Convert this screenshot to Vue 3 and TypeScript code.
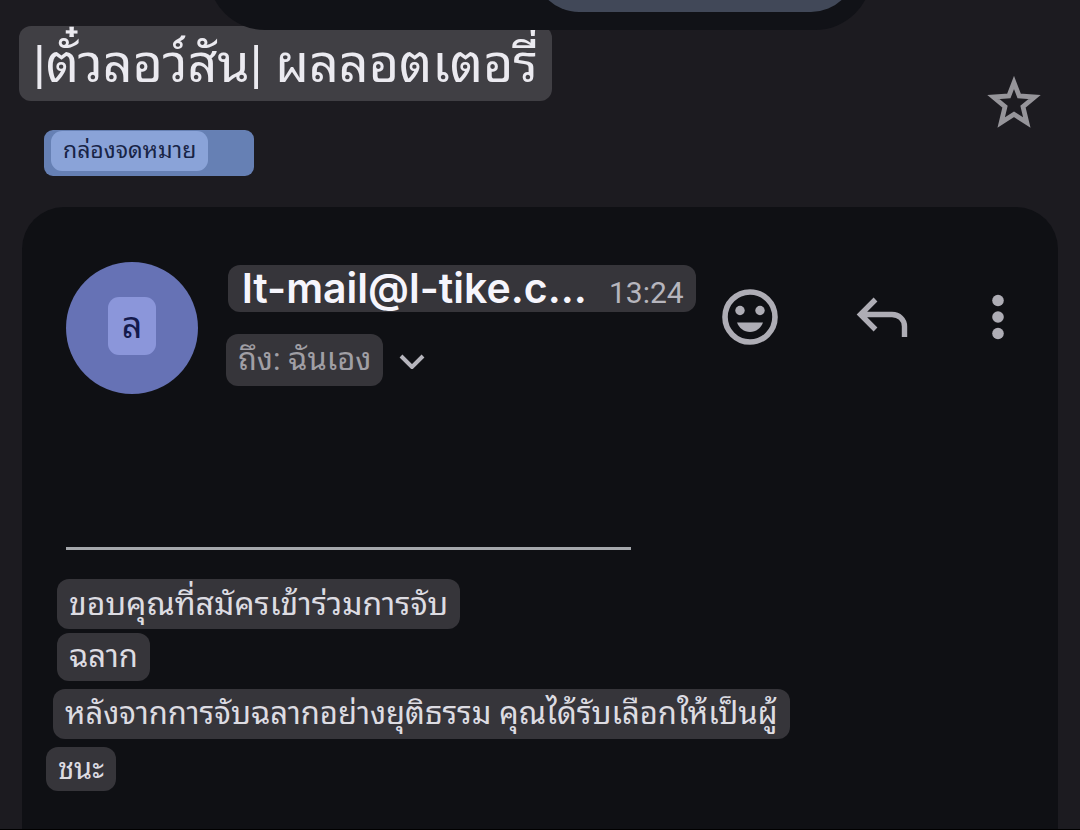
<script setup lang="ts">
interface BodyLine {
  text: string
  kind: 'intro' | 'result' | 'closing'
}

const subject = '|ตั๋วลอว์สัน| ผลลอตเตอรี่'
const folder = 'กล่องจดหมาย'
const sender = { initial: 'ล', address: 'lt-mail@l-tike.c...', time: '13:24', to: 'ถึง: ฉันเอง' }

const lines: BodyLine[] = [
  { text: 'ขอบคุณที่สมัครเข้าร่วมการจับ', kind: 'intro' },
  { text: 'ฉลาก', kind: 'intro' },
  { text: 'หลังจากการจับฉลากอย่างยุติธรรม คุณได้รับเลือกให้เป็นผู้', kind: 'result' },
  { text: 'ชนะ', kind: 'closing' },
]
</script>

<template>
  <main class="screen">
    <div class="island"><span class="island-pill"></span></div>

    <header class="top">
      <div class="heading">
        <h1 class="subject">{{ subject }}</h1>
        <button class="folder" type="button"><span>{{ folder }}</span></button>
      </div>
      <button class="icon-btn star" type="button" aria-label="ติดดาว">
        <svg width="54" height="52" viewBox="0 0 54 52">
          <path
            fill="none" stroke="currentColor" stroke-width="4.800"
            d="M27 6.500 L32.200 20 L47.600 21 L36 30.700 L39.800 46.500 L27 38.300 L14.200 46.500 L18 30.700 L6.400 21 L21.800 20 Z"
          />
        </svg>
      </button>
    </header>

    <article class="card">
      <div class="sender">
        <div class="avatar"><span>{{ sender.initial }}</span></div>
        <div class="who">
          <div class="from">
            <strong>{{ sender.address }}</strong>
            <time>{{ sender.time }}</time>
          </div>
          <button class="to" type="button">
            <span class="to-chip">{{ sender.to }}</span>
            <svg width="26" height="18" viewBox="0 0 26 18">
              <path d="M2 5 L13 16 L24 5" fill="none" stroke="currentColor" stroke-width="4" />
            </svg>
          </button>
        </div>
        <div class="actions">
          <button class="icon-btn" type="button" aria-label="แสดงความรู้สึก">
            <svg width="56" height="56" viewBox="0 0 56 56">
              <circle cx="28" cy="28" r="25" fill="none" stroke="currentColor" stroke-width="5.600" />
              <circle cx="18" cy="21.500" r="4.700" fill="currentColor" />
              <circle cx="38" cy="21.500" r="4.700" fill="currentColor" />
              <path d="M15 33.500 H41 C39 39 34 43 28 43 C22 43 17 39 15 33.500 Z" fill="currentColor" />
            </svg>
          </button>
          <button class="icon-btn" type="button" aria-label="ตอบกลับ">
            <svg width="52" height="42" viewBox="0 0 52 42">
              <path
                d="M19.500 3.500 L4.500 18.500 L19.500 33.500 M5 18.500 H36 C43 18.500 48.500 23.500 48.500 30.500 V41"
                fill="none" stroke="currentColor" stroke-width="5.400"
              />
            </svg>
          </button>
          <button class="icon-btn more" type="button" aria-label="เพิ่มเติม">
            <svg width="12" height="46" viewBox="0 0 12 46">
              <circle cx="6" cy="6.500" r="5.800" fill="currentColor" />
              <circle cx="6" cy="23" r="5.800" fill="currentColor" />
              <circle cx="6" cy="39.500" r="5.800" fill="currentColor" />
            </svg>
          </button>
        </div>
      </div>

      <hr class="rule" />

      <div class="body">
        <p v-for="line in lines" :key="line.text" class="line" :class="line.kind">{{ line.text }}</p>
      </div>
    </article>
  </main>
</template>

<style>
body {
  margin: 0;
  background: #1c1b20;
}
</style>

<style scoped>
.screen {
  position: relative;
  display: flex;
  flex-direction: column;
  box-sizing: border-box;
  min-height: 100vh;
  overflow: hidden;
  border-bottom: 1px solid #000;
  background: #1c1b20;
  color: #dddce2;
  font-family: Roboto, "Noto Sans Thai Looped", "Liberation Sans", sans-serif;
}

button {
  padding: 0;
  border: 0;
  background: none;
  color: inherit;
  font: inherit;
  cursor: pointer;
}

svg {
  display: block;
}

.island {
  position: absolute;
  z-index: 1;
  top: -84px;
  left: 50%;
  display: flex;
  justify-content: flex-end;
  align-items: flex-end;
  box-sizing: border-box;
  width: 664px;
  height: 114px;
  margin-left: -332px;
  padding: 0 16px 18px;
  border-radius: 57px;
  background: #111217;
}

.island-pill {
  width: 322px;
  height: 90px;
  border-radius: 45px;
  background: #414858;
}

.top {
  display: flex;
  justify-content: space-between;
  align-items: flex-start;
  padding: 26px 39px 0 19px;
}

.subject {
  margin: 0;
  padding: 2px 14px 0;
  border-radius: 12px;
  background: #403f44;
  color: #ebeaf0;
  font-size: 52px;
  font-weight: 400;
  line-height: 73px;
  white-space: nowrap;
}

.folder {
  display: flex;
  align-items: flex-start;
  box-sizing: border-box;
  width: 210px;
  height: 46px;
  margin: 29px 0 31px 25px;
  padding: 1px 7px 0;
  border-radius: 9px;
  background: #6680b4;
  color: #182446;
}

.folder span {
  padding: 0 12px;
  border-radius: 11px;
  background: #8aa3d8;
  font-size: 23px;
  line-height: 40px;
}

.icon-btn {
  color: #aeadb5;
}

.star {
  margin-top: 50px;
  color: #96959a;
}

.card {
  flex: 1;
  margin: 0 22px;
  border-radius: 42px 42px 0 0;
  background: #0f1014;
}

.sender {
  display: flex;
  align-items: flex-start;
  padding: 55px 54px 0 44px;
}

.avatar {
  display: flex;
  justify-content: center;
  align-items: center;
  width: 132px;
  height: 132px;
  border-radius: 50%;
  background: #6672b5;
  color: #141a4c;
}

.avatar span {
  width: 48px;
  margin-bottom: 4px;
  border-radius: 11px;
  background: #8b96da;
  font-size: 36px;
  line-height: 58px;
  text-align: center;
}

.who {
  padding: 3px 0 0 28px;
}

.from {
  display: flex;
  align-items: baseline;
  gap: 22px;
  height: 47px;
  margin-left: 2px;
  padding: 0 12px 0 14px;
  border-radius: 12px;
  background: #36353a;
  line-height: 46px;
  white-space: nowrap;
}

.from strong {
  color: #f6f5fc;
  font-family: Inter, "Liberation Sans", sans-serif;
  font-size: 41px;
  font-weight: 600;
}

.from time {
  color: #b6b5bd;
  font-size: 30px;
}

.to {
  display: flex;
  align-items: center;
  gap: 16px;
  margin-top: 22px;
  color: #b6b5bd;
}

.to-chip {
  padding: 0 12px;
  border-radius: 12px;
  background: #36353a;
  color: #a09fa5;
  font-size: 31px;
  line-height: 52px;
}

.actions {
  display: flex;
  align-items: center;
  gap: 78px;
  margin: 27px 0 0 auto;
}

.more {
  margin-left: 6px;
}

.rule {
  width: 565px;
  height: 3px;
  margin: 153px 0 0 44px;
  border: 0;
  background: #a5a8ac;
}

.body {
  display: flex;
  flex-direction: column;
  align-items: flex-start;
  gap: 8px;
  padding: 29px 24px 38px;
}

.line {
  margin: 0;
  padding: 0 12px;
  border-radius: 12px;
  background: #36353a;
  font-size: 31px;
  line-height: 50px;
}

.intro {
  margin-left: 11px;
  font-size: 32px;
}

.intro + .intro {
  margin-top: -4px;
  font-size: 31px;
  line-height: 48px;
}

.result {
  margin-left: 7px;
}

.closing {
  font-size: 29px;
  line-height: 44px;
}
</style>
